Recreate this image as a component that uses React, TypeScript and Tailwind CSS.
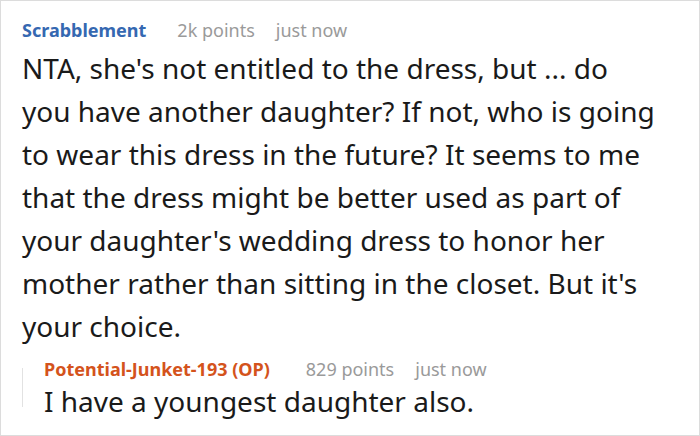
export default function App() {
  return (
    <div
      className="w-[700px] h-[436px] border border-[#dcdcdc] bg-white overflow-hidden"
      style={{ fontFamily: '"Noto Sans", "Open Sans", sans-serif' }}
    >
      <div className="pl-[21px] pr-[36px] pt-[17px]">
        <div className="flex items-baseline gap-[31px] text-[18px] leading-[24px]">
          <span className="font-bold text-[#3568b1]">Scrabblement</span>
          <span className="flex gap-[21px] text-[#9a9a9a]">
            <span>2k points</span>
            <span>just now</span>
          </span>
        </div>
        <p className="mt-[5px] text-[28px] leading-[43px] text-[#1a1a1a]">
          NTA, she's not entitled to the dress, but ... do you have another daughter? If not, who is going
          to wear this dress in the future? It seems to me that the dress might be better used as part of
          your daughter's wedding dress to honor her mother rather than sitting in the closet. But it's
          your choice.
        </p>
        <div className="mt-[9px] flex">
          <div className="w-px bg-[#e2e2e2] mt-[11px] mb-[16px]" />
          <div className="pl-[21px]">
            <div className="flex items-baseline gap-[36px] text-[18px] leading-[24px]">
              <span className="font-bold text-[#d4531c]">Potential-Junket-193 (OP)</span>
              <span className="flex gap-[21px] text-[#9a9a9a]">
                <span>829 points</span>
                <span>just now</span>
              </span>
            </div>
            <p className="-mt-[1px] text-[28px] leading-[43px] text-[#1a1a1a]">I have a youngest daughter also.</p>
          </div>
        </div>
      </div>
    </div>
  );
}
